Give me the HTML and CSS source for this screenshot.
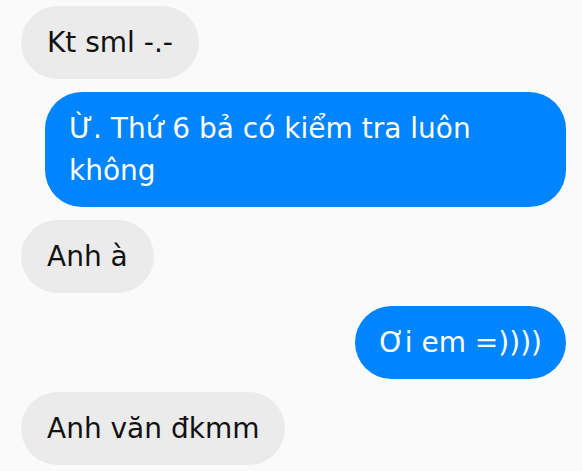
FILE: index.html
```html
<!DOCTYPE html>
<html lang="vi">
<head>
<meta charset="utf-8">
<link rel="stylesheet" href="styles.css">
</head>
<body>
<main class="chat">
  <div class="msg in">Kt sml -.-</div>
  <div class="msg out">Ừ. Thứ 6 bả có kiểm tra luôn không</div>
  <div class="msg in">Anh à</div>
  <div class="msg out">Ơi em =))))</div>
  <div class="msg in">Anh văn đkmm</div>
</main>
</body>
</html>
```
FILE: styles.css
```css
html, body {
  margin: 0;
  padding: 0;
  background: #fafafa;
}
body {
  width: 582px;
  height: 471px;
  overflow: hidden;
}
.chat {
  display: flex;
  flex-direction: column;
  gap: 13px;
  padding: 6px 16px 0 21px;
}
.msg {
  font-family: "DejaVu Sans", "Noto Sans", sans-serif;
  font-size: 28px;
  line-height: 42px;
  padding: 16px 26px 15px 26px;
  border-radius: 37px;
  max-width: 473px;
}
.in {
  align-self: flex-start;
  background: #ebebeb;
  color: #111;
}
.out {
  align-self: flex-end;
  background: #0084ff;
  color: #fff;
  padding-left: 24px;
  padding-right: 24px;
}
```
